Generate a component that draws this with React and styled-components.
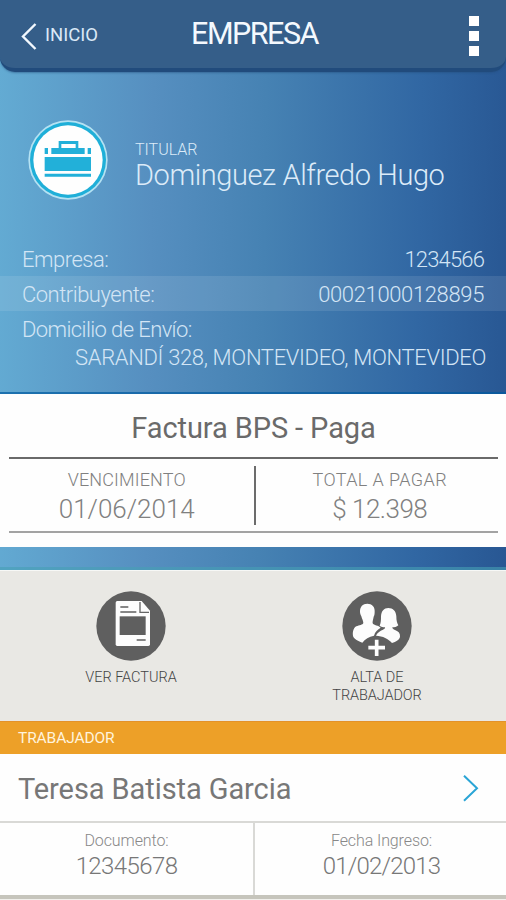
import React from 'react';
import styled, { createGlobalStyle } from 'styled-components';

const GlobalStyle = createGlobalStyle`
    *, *::before, *::after {
        box-sizing: border-box;
    }

    body {
        margin: 0;
        background: #fefefe;
        font-family: Roboto, "Liberation Sans", sans-serif;
    }
`;

const Screen = styled.div`
    width: 506px;
    height: 900px;
    overflow: hidden;
    background: #f1f0ec;
`;

const Top = styled.div`
    height: 571px;
    background: linear-gradient(91deg, #63abd3 0%, #568fc0 30%, #4682b3 52%, #3167a3 82%, #285793 100%);
    border-bottom: 1px solid #f7f8f6;
`;

const Header = styled.header`
    display: grid;
    grid-template-columns: 120px 1fr 120px;
    height: 72px;
    padding: 0 27px 0 20px;
    background: #355e89;
    border-bottom: 4px solid #214b7c;
    border-radius: 0 0 15px 15px;
    box-shadow: 0 1px 2px rgba(33, 75, 124, 0.5);
`;

const Text = styled.span`
    display: block;
    font-size: ${p => p.$size}px;
    font-weight: ${p => p.$weight || 300};
    line-height: ${p => p.$line || p.$size}px;
    letter-spacing: ${p => p.$spacing || 0}px;
    color: ${p => p.$color || 'inherit'};
    white-space: nowrap;
`;

const Back = styled.div`
    display: flex;
    align-items: flex-start;
    gap: 7px;
    padding-top: 23px;
    color: #dbe9f7;
`;

const Title = styled.h1`
    margin: 0;
    padding: 17px 0 0 10px;
    text-align: center;
    color: #f4f9fe;
`;

const Menu = styled.div`
    display: flex;
    flex-direction: column;
    align-items: flex-end;
    gap: 5px;
    padding-top: 16px;
`;

const Dot = styled.i`
    width: 10px;
    height: 10px;
    background: #fff;
`;

const Holder = styled.section`
    display: flex;
    align-items: flex-start;
    height: 169px;
    padding: 48px 0 0 28px;
    color: #dcebf8;
`;

const HolderName = styled.div`
    padding: 21px 0 0 27px;
`;

const DataRow = styled.div`
    display: flex;
    justify-content: space-between;
    height: 35px;
    padding: 0 22px 0 22px;
    color: #d3e5f5;
    background: ${p => p.$band ? 'rgba(255, 255, 255, 0.1)' : 'none'};
`;

const Address = styled.div`
    display: flex;
    justify-content: flex-end;
    height: 48px;
    padding: 1px 20px 0 0;
    color: #d3e5f5;
    border-bottom: 2px solid rgba(0, 90, 160, 0.7);
`;

const Invoice = styled.section`
    height: 153px;
    padding: 0 8px 0 9px;
    background: #fefefe;
    text-align: center;
`;

const InvoiceTitle = styled.div`
    height: 65px;
    padding-top: 17px;
    border-bottom: 2px solid #6a6a6a;
`;

const Amounts = styled.div`
    display: grid;
    grid-template-columns: 1fr 1fr;
    height: 74px;
    padding: 7px 0;
    border-bottom: 2px solid #a3a3a3;
`;

const Amount = styled.div`
    display: flex;
    flex-direction: column;
    align-items: center;
    height: 59px;
    padding: 5px 9px 0 0;

    & + & {
        padding: 5px 0 0 6px;
        border-left: 2px solid #6c6c6c;
    }
`;

const Strip = styled.div`
    height: 23px;
    border-bottom: 3px solid rgba(70, 160, 180, 0.6);
`;

const Actions = styled.section`
    display: grid;
    grid-template-columns: 246px 246px;
    height: 150px;
    padding: 20px 0 0 8px;
    background: #e9e8e4;
    color: #444;
`;

const Action = styled.div`
    display: flex;
    flex-direction: column;
    align-items: center;

    svg {
        margin-bottom: 8px;
    }
`;

const SectionBar = styled.div`
    display: flex;
    align-items: center;
    height: 33px;
    padding-left: 18px;
    background: #eda028;
    border-top: 1px solid #e3922a;
    color: #fff3dd;
`;

const Worker = styled.div`
    display: flex;
    justify-content: space-between;
    align-items: center;
    height: 69px;
    padding: 2px 26px 0 18px;
    background: #fefefe;
    border-bottom: 2px solid #d9d9d6;
`;

const WorkerData = styled.div`
    display: grid;
    grid-template-columns: 253px 253px;
    height: 76px;
    background: #fefefe;
    border-bottom: 4px solid #c6c5bc;
`;

const Cell = styled.div`
    display: flex;
    flex-direction: column;
    align-items: center;
    padding-top: 9px;

    & + & {
        padding-left: 2px;
        border-left: 2px solid #d9d9d6;
    }
`;

const BackIcon = () => (
    <svg width='18' height='28' viewBox='0 0 18 28'>
        <path d='M15.5 1 3 13.5l12.5 12.5' fill='none' stroke='#f2f8fe' strokeWidth='2.4'/>
    </svg>
);

const NextIcon = () => (
    <svg width='18' height='28' viewBox='0 0 18 28'>
        <path d='M2 .7 15 13.2 2 25.7' fill='none' stroke='#2aa5d6' strokeWidth='2'/>
    </svg>
);

const BriefcaseIcon = () => (
    <svg width='80' height='80' viewBox='0 0 240 240'>
        <circle cx='120' cy='120' r='119' fill='#b5e2f3'/>
        <circle cx='120' cy='120' r='114' fill='#1fafd8'/>
        <circle cx='120' cy='120' r='104' fill='#fefefe'/>
        <g fill='#22b0d9'>
            <path d='M92 63h59v21h19v18H70V84h22zM100 72v12h43V72z' fillRule='evenodd'/>
            <path d='M50 84h10v18H50zM179 84h10v18h-10zM50 111h139v42H50zM50 161h139v9H50z'/>
        </g>
    </svg>
);

const InvoiceIcon = () => (
    <svg width='70' height='70' viewBox='0 0 210 210'>
        <circle cx='105' cy='105' r='104' fill='#5f5f5f'/>
        <path d='M64 30h73l25 29v101q0 5-5 5H64q-5 0-5-5V35q0-5 5-5z' fill='#fdfdfd'/>
        <path d='M132 33v31h27' fill='none' stroke='#666' strokeWidth='4'/>
        <path d='M71 76h78v56H71z' fill='#5f5f5f'/>
        <path d='M73 48h24M73 63h48M122 147h27' stroke='#5f5f5f' strokeWidth='5'/>
    </svg>
);

const AddWorkerIcon = () => (
    <svg width='70' height='70' viewBox='0 0 210 210'>
        <circle cx='105' cy='105' r='104' fill='#5f5f5f'/>
        <path d='M76 38c14 0 23 9 22 24 0 7-1 11-3 15-2 10-4 16-3 20 3 6 18 7 24 13-9 5-17 12-20 24-15 3-27 10-35 21-14-5-26-12-28-20-2-15 3-25 10-29 9-4 19-4 21-10 0-6-4-12-6-20-3-5-4-9-4-15 0-14 8-23 22-23z' fill='#fdfdfd'/>
        <path d='M139 51c14 0 23 9 24 25 0 13 2 21 6 27-5 5-12 6-18 6 0 4 3 6 8 8 11 4 16 10 15 20-1 9-12 15-24 19-11-13-27-21-48-22 3-9 12-14 21-18 5-2 7-4 6-7-6 0-12-2-16-5 4-8 4-18 4-28 1-16 9-25 22-25z' fill='#fdfdfd'/>
        <path d='M104 146v49M79 170h50' stroke='#fdfdfd' strokeWidth='11'/>
    </svg>
);

const App = () => (
    <Screen>
        <GlobalStyle/>
        <Top>
            <Header>
                <Back>
                    <BackIcon/>
                    <Text $size={18.5} $weight={400} $line={24}>INICIO</Text>
                </Back>
                <Title><Text $size={30.5} $weight={400} $line={34} $spacing={-1.5}>EMPRESA</Text></Title>
                <Menu><Dot/><Dot/><Dot/></Menu>
            </Header>

            <Holder>
                <BriefcaseIcon/>
                <HolderName>
                    <Text $size={16} $line={18}>TITULAR</Text>
                    <Text $size={29} $line={32} $spacing={-0.42}>Dominguez Alfredo Hugo</Text>
                </HolderName>
            </Holder>

            <DataRow>
                <Text $size={22} $line={38} $spacing={-0.5}>Empresa:</Text>
                <Text $size={22} $line={38} $spacing={-0.85}>1234566</Text>
            </DataRow>
            <DataRow $band>
                <Text $size={22} $line={38} $spacing={-0.5}>Contribuyente:</Text>
                <Text $size={22} $line={38} $spacing={-0.36}>00021000128895</Text>
            </DataRow>
            <DataRow>
                <Text $size={22} $line={38} $spacing={-0.6}>Domicilio de Envío:</Text>
            </DataRow>
            <Address>
                <Text $size={22} $line={22} $spacing={-0.34}>SARANDÍ 328, MONTEVIDEO, MONTEVIDEO</Text>
            </Address>

            <Invoice>
                <InvoiceTitle>
                    <Text $size={29} $weight={400} $line={34} $spacing={-0.1} $color='#6a6a6a'>Factura BPS - Paga</Text>
                </InvoiceTitle>
                <Amounts>
                    <Amount>
                        <Text $size={18} $line={18} $spacing={0.15} $color='#808080'>VENCIMIENTO</Text>
                        <Text $size={26} $line={40} $color='#808080'>01/06/2014</Text>
                    </Amount>
                    <Amount>
                        <Text $size={18} $line={18} $spacing={0.4} $color='#808080'>TOTAL A PAGAR</Text>
                        <Text $size={26} $line={40} $spacing={-0.5} $color='#808080'>$ 12.398</Text>
                    </Amount>
                </Amounts>
            </Invoice>
            <Strip/>
        </Top>

        <Actions>
            <Action>
                <InvoiceIcon/>
                <Text $size={14.5} $line={18}>VER FACTURA</Text>
            </Action>
            <Action>
                <AddWorkerIcon/>
                <Text $size={14.5} $line={18}>ALTA DE</Text>
                <Text $size={14.5} $line={18} $spacing={-0.1}>TRABAJADOR</Text>
            </Action>
        </Actions>

        <SectionBar>
            <Text $size={15.5} $weight={400} $line={32} $spacing={-0.1}>TRABAJADOR</Text>
        </SectionBar>
        <Worker>
            <Text $size={29} $weight={400} $line={34} $spacing={-0.08} $color='#777'>Teresa Batista Garcia</Text>
            <NextIcon/>
        </Worker>
        <WorkerData>
            <Cell>
                <Text $size={16} $line={18} $spacing={-0.1} $color='#888'>Documento:</Text>
                <Text $size={24} $line={32} $spacing={-0.6} $color='#777'>12345678</Text>
            </Cell>
            <Cell>
                <Text $size={16} $line={18} $spacing={-0.1} $color='#888'>Fecha Ingreso:</Text>
                <Text $size={24} $line={32} $spacing={-0.8} $color='#777'>01/02/2013</Text>
            </Cell>
        </WorkerData>
    </Screen>
);

export default App;
